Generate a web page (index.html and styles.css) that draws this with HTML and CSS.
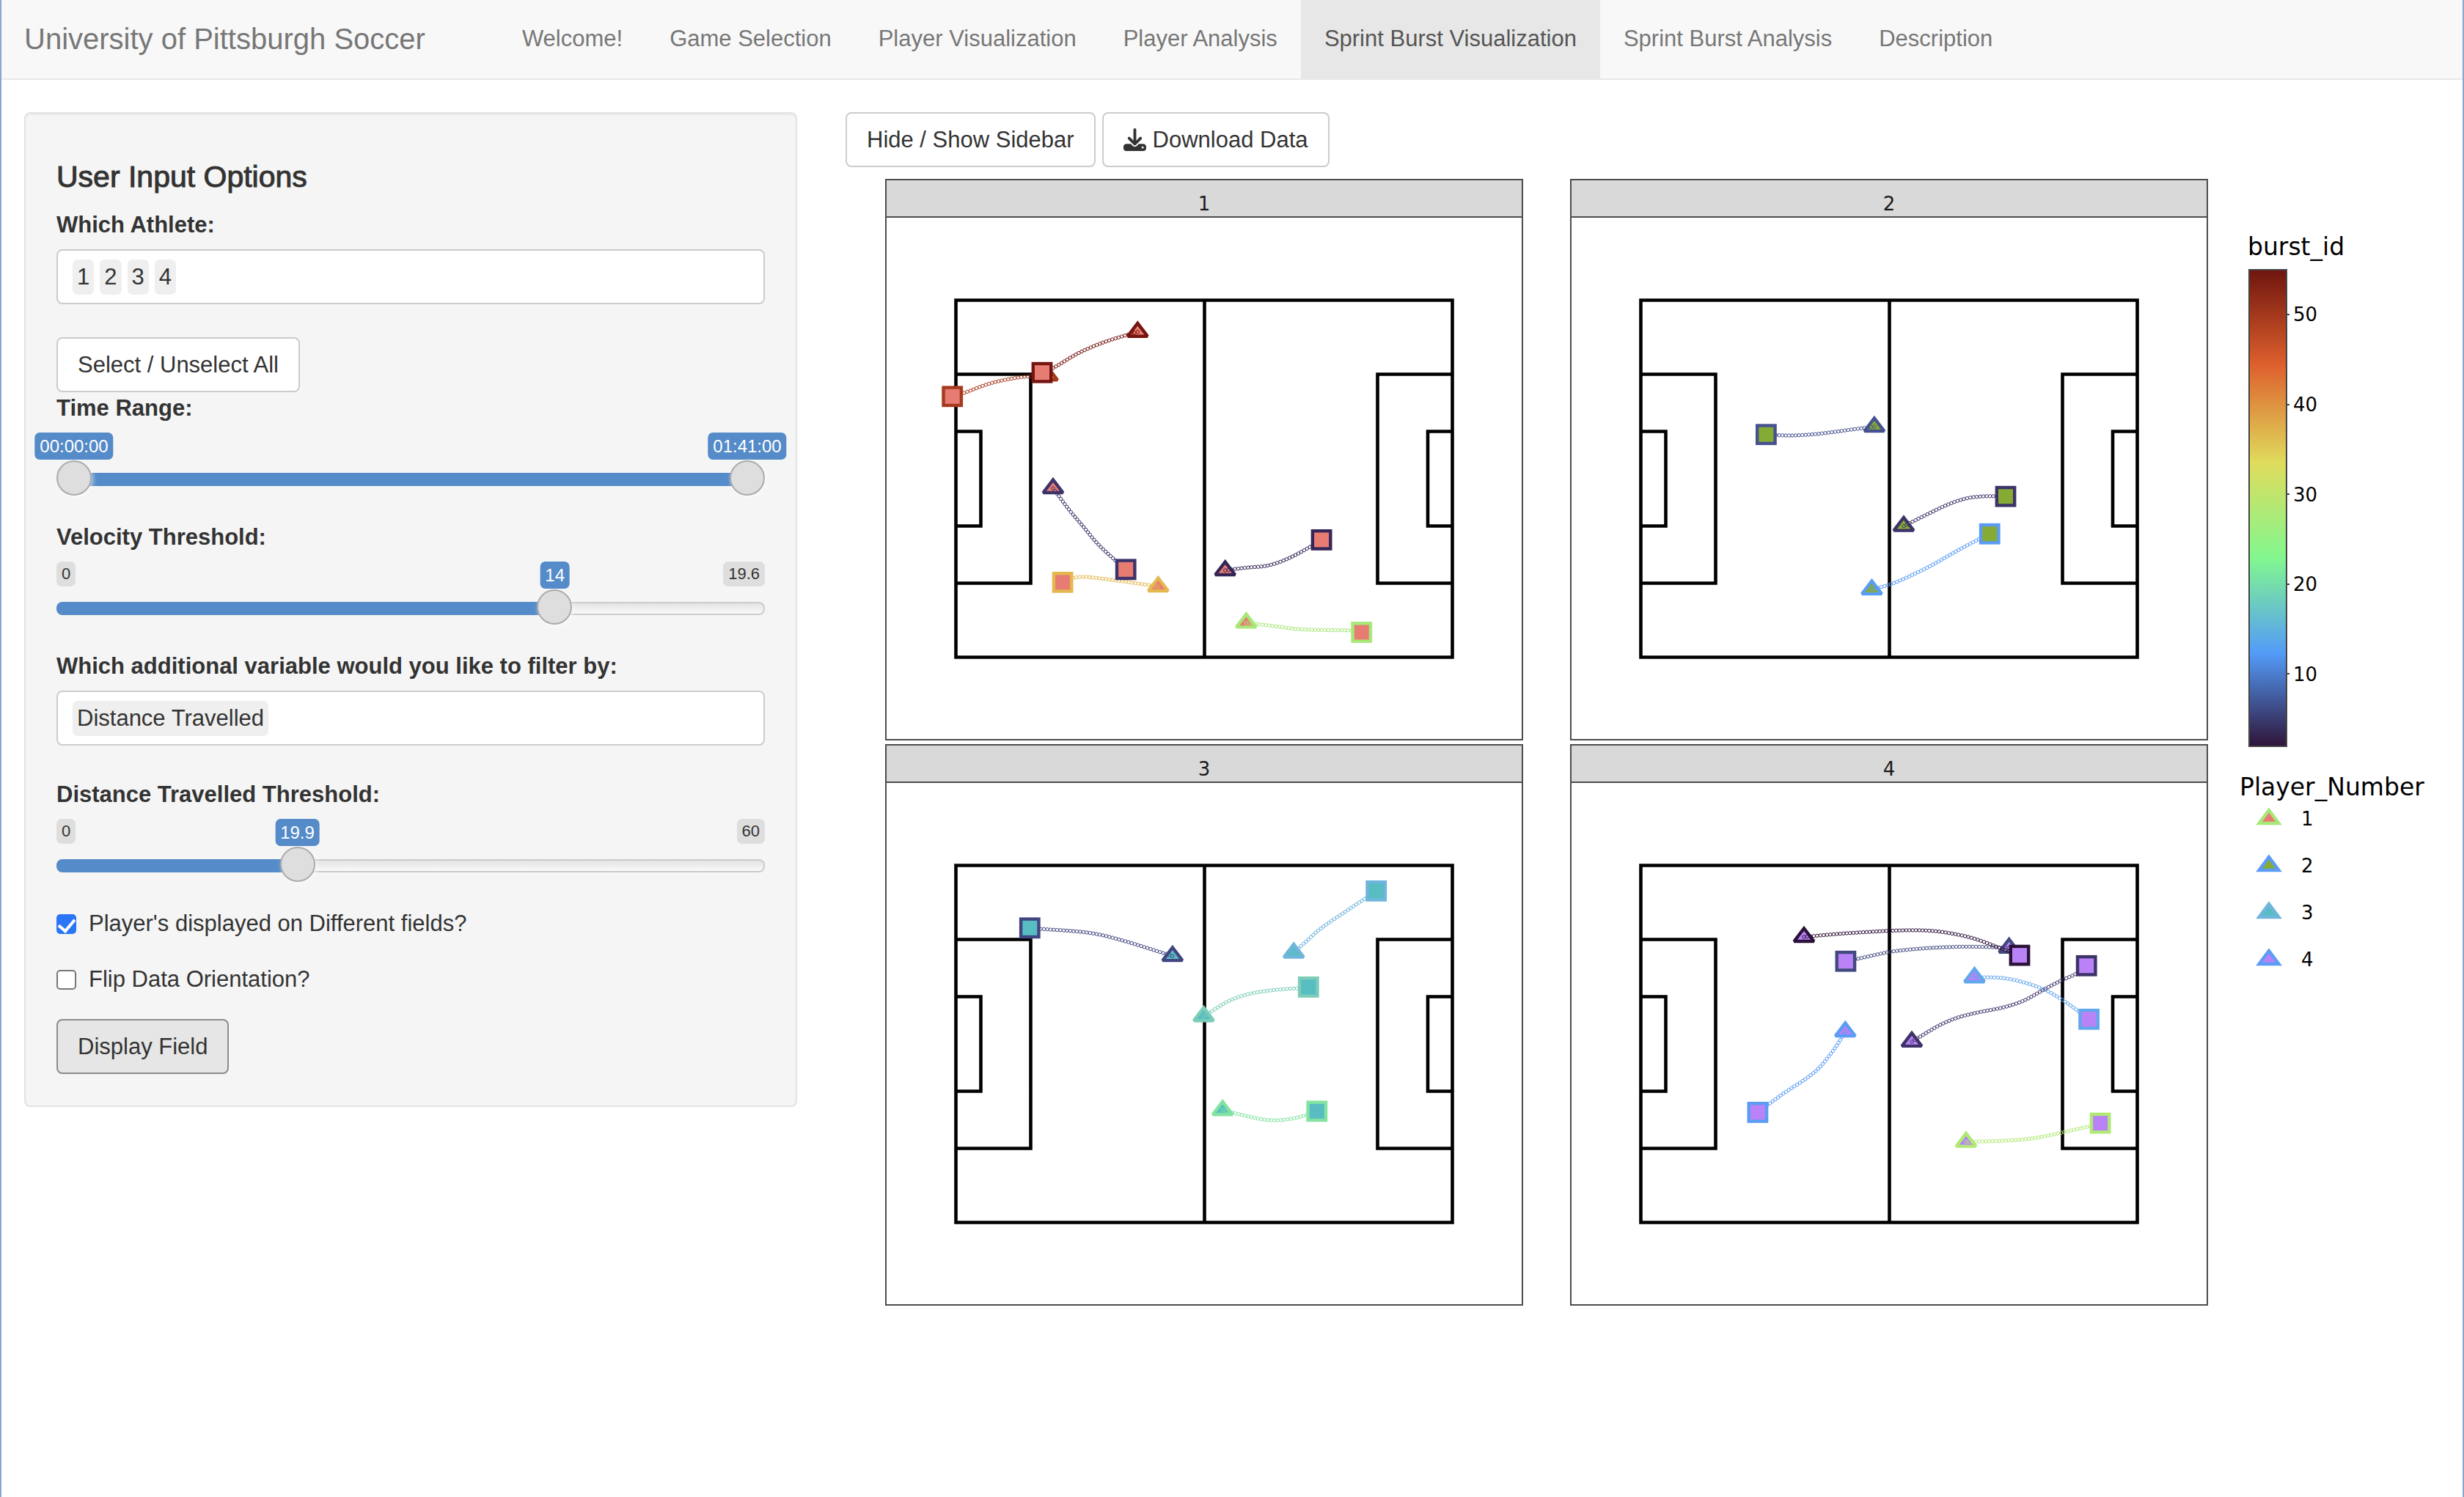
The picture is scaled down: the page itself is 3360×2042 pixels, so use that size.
FILE: index.html
```html
<!DOCTYPE html>
<html lang="en">
<head>
<meta charset="utf-8">
<title>University of Pittsburgh Soccer</title>
<link rel="stylesheet" href="styles.css">
</head>
<body>
<header class="navbar">
  <a class="brand" href="#">University of Pittsburgh Soccer</a>
  <nav class="tabs">
    <a class="tab" href="#welcome">Welcome!</a>
    <a class="tab" href="#games">Game Selection</a>
    <a class="tab" href="#player-vis">Player Visualization</a>
    <a class="tab" href="#player-analysis">Player Analysis</a>
    <a class="tab tab-active" href="#burst-vis" aria-current="page">Sprint Burst Visualization</a>
    <a class="tab" href="#burst-analysis">Sprint Burst Analysis</a>
    <a class="tab" href="#description">Description</a>
  </nav>
</header>

<main class="layout">
  <div class="column">
    <form class="sidebar">
      <h4 class="heading">User Input Options</h4>

      <label class="label" for="athlete">Which Athlete:</label>
      <div class="picker">
        <span class="item">1</span><span class="item">2</span><span class="item">3</span><span class="item">4</span>
        <input class="picker-input" id="athlete" type="text">
      </div>

      <button class="btn" type="button">Select / Unselect All</button>

      <label class="label" for="time-from">Time Range:</label>
      <div class="slider slider-double">
        <output class="value" style="--p:0">00:00:00</output>
        <output class="value" style="--p:1">01:41:00</output>
        <input class="range" id="time-from" type="range" min="0" max="6060" value="0" style="--p:0">
        <input class="range range-over" type="range" min="0" max="6060" value="6060" aria-label="Time range end">
      </div>

      <label class="label" for="velocity">Velocity Threshold:</label>
      <div class="slider">
        <span class="limit limit-min">0</span>
        <span class="limit limit-max">19.6</span>
        <output class="value" style="--p:0.7143">14</output>
        <input class="range" id="velocity" type="range" min="0" max="19.6" step="0.1" value="14" style="--p:0.7143">
      </div>

      <label class="label" for="variable">Which additional variable would you like to filter by:</label>
      <div class="picker">
        <span class="item">Distance Travelled</span>
        <input class="picker-input" id="variable" type="text">
      </div>

      <label class="label" for="distance">Distance Travelled Threshold:</label>
      <div class="slider">
        <span class="limit limit-min">0</span>
        <span class="limit limit-max">60</span>
        <output class="value" style="--p:0.3317">19.9</output>
        <input class="range" id="distance" type="range" min="0" max="60" step="0.1" value="19.9" style="--p:0.3317">
      </div>

      <label class="check"><input class="box" type="checkbox" checked>Player's displayed on Different fields?</label>
      <label class="check"><input class="box" type="checkbox">Flip Data Orientation?</label>

      <button class="btn btn-pressed" type="button">Display Field</button>
    </form>
  </div>

  <div class="column">
    <div class="toolbar">
      <button class="btn" type="button">Hide / Show Sidebar</button>
      <button class="btn btn-icon" type="button">
        <svg class="icon" viewBox="0 0 512 512" aria-hidden="true"><path d="M288 32c0-17.700-14.300-32-32-32s-32 14.300-32 32V274.700l-73.400-73.400c-12.500-12.500-32.800-12.500-45.300 0s-12.500 32.800 0 45.300l128 128c12.500 12.500 32.800 12.500 45.300 0l128-128c12.500-12.500 12.500-32.800 0-45.300s-32.800-12.500-45.300 0L288 274.700V32zM64 352c-35.300 0-64 28.700-64 64v32c0 35.300 28.700 64 64 64H448c35.300 0 64-28.700 64-64V416c0-35.300-28.700-64-64-64H346.500l-45.300 45.300c-25 25-65.500 25-90.500 0L165.500 352H64zm368 56a24 24 0 1 1 0 48 24 24 0 1 1 0-48z"/></svg>
        Download Data
      </button>
    </div>

    <div class="plot">
      <div class="facets">
        <figure class="facet">
          <figcaption class="strip">1</figcaption>
          <svg class="field" viewBox="0 0 866 711" data-player="1"></svg>
        </figure>
        <figure class="facet">
          <figcaption class="strip">2</figcaption>
          <svg class="field" viewBox="0 0 866 711" data-player="2"></svg>
        </figure>
        <figure class="facet">
          <figcaption class="strip">3</figcaption>
          <svg class="field" viewBox="0 0 866 711" data-player="3"></svg>
        </figure>
        <figure class="facet">
          <figcaption class="strip">4</figcaption>
          <svg class="field" viewBox="0 0 866 711" data-player="4"></svg>
        </figure>
      </div>

      <aside class="legends">
        <h5 class="legend-title legend-title-bar">burst_id</h5>
        <svg class="colorbar" viewBox="0 0 120 652">
          <defs>
            <linearGradient id="turbo" x1="0" y1="0" x2="0" y2="1">
              <stop offset="0" stop-color="#6f150e"/>
              <stop offset="0.2" stop-color="#de602d"/>
              <stop offset="0.405" stop-color="#dfdc5c"/>
              <stop offset="0.605" stop-color="#82f78f"/>
              <stop offset="0.805" stop-color="#539bf8"/>
              <stop offset="1" stop-color="#2f1438"/>
            </linearGradient>
          </defs>
          <rect x="1" y="1" width="51" height="650" fill="url(#turbo)" stroke="#444" stroke-width="2"/>
          <g class="ticks">
            <path d="M52 62h4M52 185h4M52 307h4M52 430h4M52 552h4"/>
            <text x="61" y="71">50</text>
            <text x="61" y="194">40</text>
            <text x="61" y="317">30</text>
            <text x="61" y="439">20</text>
            <text x="61" y="562">10</text>
          </g>
        </svg>

        <h5 class="legend-title">Player_Number</h5>
        <ul class="keys">
          <li class="key"><svg class="glyph" viewBox="0 0 40 48"><path d="M20 12L33.500 30H6.500z" fill="#e77d72" stroke="#a8e878"/></svg>1</li>
          <li class="key"><svg class="glyph" viewBox="0 0 40 48"><path d="M20 12L33.500 30H6.500z" fill="#86ab34" stroke="#5b9cf5"/></svg>2</li>
          <li class="key"><svg class="glyph" viewBox="0 0 40 48"><path d="M20 12L33.500 30H6.500z" fill="#57bdc3" stroke="#70b5dc"/></svg>3</li>
          <li class="key"><svg class="glyph" viewBox="0 0 40 48"><path d="M20 12L33.500 30H6.500z" fill="#b983f7" stroke="#5b9cf5"/></svg>4</li>
        </ul>
      </aside>
    </div>
  </div>
</main>
<script src="plot.js"></script>
</body>
</html>
```
FILE: plot.js
```js
// Each burst: [colour, [x, y, x, y, ...]], from its start (triangle) to its end (square).
const players = {
  1: { fill: '#e77d72', bursts: [
    ['#a63a1e', [219.5,215.3, 194.8,216, 174.7,218.5, 140,225.5, 105.8,239.3, 89.7,243.8]],
    ['#741510', [342.3,155.7, 318,162.6, 289.5,172, 258,185.9, 227.5,205.5, 212,211.2]],
    ['#e5b84f', [370.4,503, 335.4,497.7, 301,493.2, 272.3,489.6, 255,490.4, 240.1,497.3]],
    ['#3e3369', [227,369, 235,379.8, 249.3,399.4, 270.5,423.8, 286.6,444.3, 309.6,465.5, 326.2,479.8]],
    ['#352657', [461.7,481, 490.4,476.9, 519,475.7, 547.8,465.5, 578.2,448.7, 593.1,439.4]],
    ['#a8e878', [490.4,552.4, 524.8,556.5, 559.3,561.4, 593.7,562.6, 633.9,562.6, 647.7,565.5]]
  ]},
  2: { fill: '#86ab34', bursts: [
    ['#46528f', [412.9,285, 383,288.7, 354.4,292.8, 325.7,296, 297,297.3, 279.7,296.5, 265.4,295.7]],
    ['#3e3369', [453,420.6, 480.6,406.7, 512.2,391.2, 538,382.2, 561,379.8, 577.6,379.8, 592,380.2]],
    ['#5a9cf5', [409.5,507.1, 434.7,501, 463.4,487.9, 492.1,474, 520.8,456.9, 555.3,438.5, 570.2,431.2]]
  ]},
  3: { fill: '#57bdc3', bursts: [
    ['#42457f', [389.9,236.1, 364.1,227.9, 323.9,215.2, 286.6,205.5, 255,201.9, 212,199.3, 195.3,197.8]],
    ['#70b5dc', [555.2,231.5, 570.7,217.7, 590.8,198.8, 616.7,181.5, 652.8,157.5, 667.7,147.3]],
    ['#7bcdb8', [432.4,318.2, 450.2,307, 467.4,296.3, 496,286.6, 530.6,282, 561,280, 575.3,278.4]],
    ['#82e3a0', [458.2,446.3, 484.6,452.9, 513.3,459.5, 533.4,460.6, 556.4,457.5, 571.9,453.4, 586.8,447.8]]
  ]},
  4: { fill: '#b983f7', bursts: [
    ['#424a7f', [596.6,224.9, 549.5,222.8, 497.9,224.3, 463.4,226.9, 434.7,230, 411.8,235.1, 388.8,240.2, 373.9,243.2]],
    ['#2c1238', [317,210, 360.1,206, 400.3,203.4, 446.2,200.9, 486.4,200.9, 515,204.4, 549.5,211.6, 589.7,227.4, 611,235.1]],
    ['#62a7ec', [549.5,265.2, 578.2,264.7, 604,268.2, 641.4,279.4, 670,295.8, 690.7,311.1, 705.6,322.3]],
    ['#3e3369', [464,352.9, 480.6,342.7, 506.5,327.4, 538,315.7, 606.9,303.4, 647.1,280, 670,268.2, 687.9,261.1, 702.2,249.3]],
    ['#5b9cf5', [373.3,339.1, 363,357, 348.6,375.9, 336,391.2, 317,405.5, 291.2,421.8, 268.3,438.6, 253.9,449.3]],
    ['#b0ea74', [538,489.6, 606.9,488.1, 647.1,482, 681.5,473.8, 706.2,468.7, 721.1,464.1]]
  ]}
};

const pitch = 'M94.5 112.500H771.5V599.500H94.500zM433.5 112.500V599.500' +
  'M94.5 213.500H196.500V498.500H94.500M771.5 213.500H669.500V498.500H771.500' +
  'M94.5 291.500H128.500V420.500H94.500M771.5 291.500H738V420.500H771.500';

function add(parent, tag, attrs) {
  const el = document.createElementNS('http://www.w3.org/2000/svg', tag);
  for (const name in attrs) el.setAttribute(name, attrs[name]);
  parent.appendChild(el);
  return el;
}

for (const svg of document.querySelectorAll('.field')) {
  const { fill, bursts } = players[svg.dataset.player];
  add(svg, 'path', { class: 'pitch', d: pitch });

  for (const [stroke, p] of bursts) {
    const [x, y] = p;
    add(svg, 'path', { class: 'mark', fill, stroke,
      d: `M${x - 13.5} ${y + 6}H${x + 13.5}L${x} ${y - 11.700}z` });
  }

  for (const [stroke, p] of bursts) {
    // Smooth the track through the midpoints of its vertices.
    let d = `M${p[0]} ${p[1]}`;
    for (let i = 2; i < p.length - 2; i += 2) {
      d += `Q${p[i]} ${p[i + 1]} ${(p[i] + p[i + 2]) / 2} ${(p[i + 1] + p[i + 3]) / 2}`;
    }
    d += `L${p[p.length - 2]} ${p[p.length - 1]}`;
    const line = add(svg, 'path', { d, fill: 'none' });
    const total = line.getTotalLength();
    for (let at = 0; at < total; at += 4.5) {
      const c = line.getPointAtLength(at);
      add(svg, 'circle', { class: 'dot', cx: c.x, cy: c.y, r: 2.2, stroke });
    }
  }

  for (const [stroke, p] of bursts) {
    const x = p[p.length - 2], y = p[p.length - 1];
    add(svg, 'rect', { class: 'mark', fill, stroke, x: x - 12.2, y: y - 12.2, width: 24.4, height: 24.4 });
  }
}
```
FILE: styles.css
```css
* {
  box-sizing: border-box;
}

body {
  margin: 0;
  min-height: 100vh;
  background: #fff;
  color: #333;
  font-family: "Liberation Sans", Arial, sans-serif;
  font-size: 31px;
  line-height: 44px;
}

/* window edge */
body::after {
  content: "";
  position: fixed;
  inset: 0;
  border: solid #87a5d9;
  border-width: 0 2px;
  pointer-events: none;
}

/* navigation */
.navbar {
  display: flex;
  background: #f8f8f8;
  border-bottom: 2px solid #e7e7e7;
}

.brand {
  padding: 31px 33px 32px;
  color: #777;
  font-size: 40px;
  text-decoration: none;
}

.tabs {
  display: flex;
  margin: 0 0 -2px 67px;
}

.tab {
  padding: 31px 32px 34px;
  color: #777;
  text-decoration: none;
}

.tab-active {
  background: #e7e7e7;
  color: #555;
}

.layout {
  display: grid;
  grid-template-columns: 1fr 2fr;
  align-items: start;
  padding-top: 44px;
}

.column {
  padding: 0 33px;
}

/* sidebar */
.sidebar {
  padding: 64px 42px 43px;
  border: 2px solid #e3e3e3;
  border-radius: 8px;
  background: #f5f5f5;
  box-shadow: inset 0 2px 2px rgba(0, 0, 0, 0.05);
}

/* medium weight, between the face's regular and bold */
.heading {
  margin: 0 0 22px;
  font-size: 41px;
  font-weight: 500;
  -webkit-text-stroke: 1px #333;
}

.label {
  display: block;
  margin-bottom: 11px;
  font-weight: bold;
}

.picker {
  display: flex;
  align-items: center;
  gap: 8px;
  height: 75px;
  margin-bottom: 45px;
  padding: 0 20px;
  border: 2px solid #ccc;
  border-radius: 8px;
  background: #fff;
}

.item {
  padding: 0 6px;
  border-radius: 7px;
  background: #efefef;
  line-height: 48px;
}

.picker-input {
  flex: 1;
  min-width: 0;
  border: 0;
  outline: 0;
  background: none;
  font: inherit;
}

.btn {
  padding: 14px 27px;
  border: 2px solid #ccc;
  border-radius: 8px;
  background: #fff;
  color: #333;
  font: inherit;
  line-height: 43px;
}

.btn-pressed {
  border-color: #8c8c8c;
  background: #e6e6e6;
}

.sidebar > .btn {
  display: block;
}

.btn-icon {
  display: flex;
  align-items: center;
  gap: 9px;
}

.icon {
  width: 31px;
  height: 31px;
  fill: #333;
}

/* sliders: --p is the handle's place, 0 to 1 */
.slider {
  position: relative;
  margin-bottom: 31px;
  padding-top: 38px;
}

.value,
.limit {
  position: absolute;
  top: 0;
  padding: 0 7px;
  border-radius: 7px;
}

.value {
  left: calc(24px + (100% - 48px) * var(--p));
  transform: translateX(-50%);
  background: #548bc8;
  color: #fff;
  font-size: 24px;
  line-height: 37px;
}

.limit {
  background: #dedede;
  font-size: 22px;
  line-height: 34px;
}

.limit-min {
  left: 0;
}

.limit-max {
  right: 0;
}

.range {
  display: block;
  width: 100%;
  height: 52px;
  margin: 0;
  appearance: none;
  background: none;
}

.range::-webkit-slider-runnable-track {
  height: 18px;
  border: 2px solid transparent;
  border-radius: 8px;
  background:
    linear-gradient(#548bc8, #548bc8) 0 0 / calc(24px + (100% - 48px) * var(--p)) 100% no-repeat border-box,
    linear-gradient(#e4e4e4, #f9f9f9) padding-box,
    linear-gradient(#ccc, #ccc) border-box;
}

.range::-webkit-slider-thumb {
  width: 48px;
  height: 48px;
  margin-top: -19px;
  appearance: none;
  border: 2px solid #ababab;
  border-radius: 50%;
  background: #dedede;
  box-shadow: 2px 2px 6px rgba(255, 255, 255, 0.6);
}

/* the time range fills the bar from one handle's centre to the other's */
.slider-double .range::-webkit-slider-runnable-track {
  border: 0;
  background: linear-gradient(#548bc8, #548bc8) 50% 0 / calc(100% - 48px) 100% no-repeat;
}

.slider-double .range::-webkit-slider-thumb {
  margin-top: -17px;
}

.range-over {
  position: absolute;
  top: 38px;
  left: 0;
  pointer-events: none;
}

.slider-double .range-over::-webkit-slider-runnable-track {
  background: none;
}

.range-over::-webkit-slider-thumb {
  pointer-events: auto;
}

/* tick boxes */
.check {
  display: flex;
  align-items: center;
  gap: 17px;
  margin-bottom: 32px;
}

.box {
  display: grid;
  place-items: center;
  width: 27px;
  height: 27px;
  margin: 0;
  appearance: none;
  border: 2px solid #767676;
  border-radius: 5px;
  background: #fff;
}

.box:checked {
  border-color: #2b76f6;
  background: #2b76f6;
}

.box:checked::after {
  content: "";
  width: 10px;
  height: 18px;
  margin-bottom: 4px;
  border: solid #fff;
  border-width: 0 4px 4px 0;
  transform: rotate(40deg);
}

/* plot */
.toolbar {
  display: flex;
  gap: 9px;
  margin-bottom: 16px;
}

.plot {
  display: flex;
  gap: 43px;
  padding-left: 54px;
  font-family: "DejaVu Sans", Verdana, sans-serif;
}

.facets {
  display: grid;
  flex: 1;
  grid-template-columns: 1fr 1fr;
  gap: 5px 64px;
}

.facet {
  margin: 0;
  border: 2px solid #4d4d4d;
}

.strip {
  padding: 17px 0 1px;
  border-bottom: 2px solid #4d4d4d;
  background: #d9d9d9;
  color: #1a1a1a;
  font-size: 26px;
  line-height: 31px;
  text-align: center;
}

.field {
  display: block;
  width: 100%;
}

.pitch {
  fill: none;
  stroke: #000;
  stroke-width: 4.600;
}

.mark {
  stroke-width: 4.400;
  stroke-miterlimit: 2;
}

.dot {
  fill: none;
  stroke-width: 1;
}

.legends {
  width: 273px;
  padding-top: 74px;
  color: #000;
}

.legend-title {
  margin: 0;
  font-size: 33px;
  font-weight: normal;
  line-height: 38px;
}

.legend-title-bar {
  margin: 0 0 11px 11px;
}

.colorbar {
  display: block;
  width: 120px;
  margin: 0 0 36px 12px;
}

.ticks {
  stroke: none;
  font-size: 26px;
}

.ticks path {
  stroke: #444;
  stroke-width: 2;
}

.keys {
  display: flex;
  flex-direction: column;
  gap: 16px;
  margin: 0;
  padding: 0 0 0 20px;
  list-style: none;
}

.key {
  display: flex;
  gap: 24px;
  font-size: 26px;
  line-height: 48px;
}

.glyph {
  width: 40px;
  height: 48px;
  stroke-width: 4.400;
}
```
